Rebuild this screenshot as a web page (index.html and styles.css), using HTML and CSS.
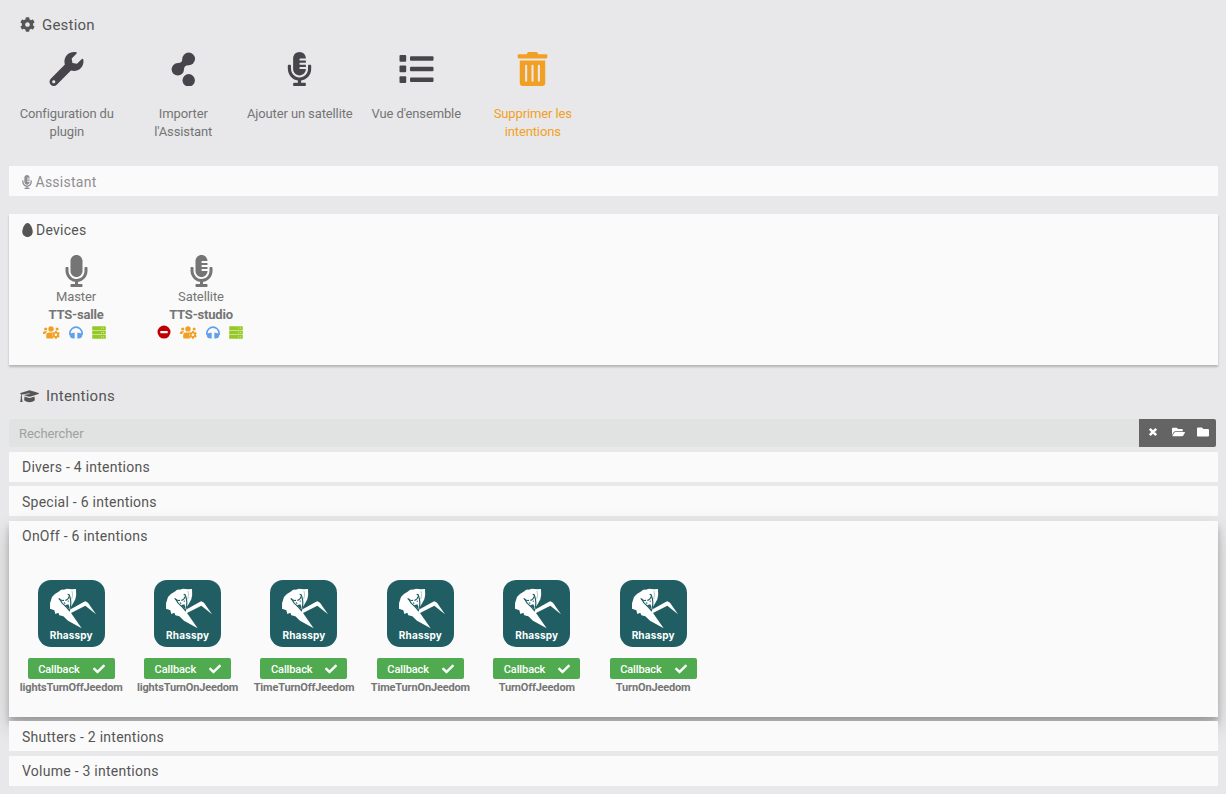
FILE: index.html
```html
<!DOCTYPE html>
<html lang="fr">
<head>
<meta charset="utf-8">
<title>Rhasspy</title>
<link rel="stylesheet" href="styles.css">
</head>
<body>
<svg class="sprite" aria-hidden="true">
  <symbol id="cog" viewBox="0 0 512 512"><path d="M487.4 315.7l-42.6-24.6c4.3-23.2 4.3-47 0-70.2l42.6-24.6c4.9-2.8 7.1-8.6 5.5-14-11.1-35.6-30-67.8-54.7-94.6-3.8-4.1-10-5.1-14.8-2.3L380.8 110c-17.9-15.4-38.5-27.3-60.8-35.1V25.8c0-5.6-3.9-10.5-9.4-11.7-36.7-8.2-74.3-7.8-109.2 0-5.5 1.2-9.4 6.1-9.4 11.7V75c-22.2 7.9-42.8 19.8-60.8 35.1L88.7 85.5c-4.9-2.8-11-1.9-14.8 2.3-24.7 26.7-43.6 58.9-54.7 94.6-1.7 5.4.6 11.2 5.5 14L67.3 221c-4.3 23.2-4.3 47 0 70.2l-42.6 24.6c-4.9 2.8-7.1 8.6-5.5 14 11.1 35.6 30 67.8 54.7 94.6 3.8 4.1 10 5.1 14.8 2.3l42.6-24.6c17.9 15.4 38.5 27.3 60.8 35.1v49.2c0 5.6 3.9 10.5 9.4 11.7 36.7 8.2 74.3 7.8 109.2 0 5.5-1.2 9.4-6.1 9.4-11.7v-49.2c22.2-7.9 42.8-19.8 60.8-35.1l42.6 24.6c4.9 2.8 11 1.9 14.8-2.3 24.7-26.7 43.6-58.9 54.7-94.6 1.5-5.5-.7-11.3-5.6-14.1zM256 336c-44.1 0-80-35.9-80-80s35.9-80 80-80 80 35.9 80 80-35.9 80-80 80z"/></symbol>
  <symbol id="wrench" viewBox="0 0 512 512"><path d="M507.73 109.1c-2.24-9.03-13.54-12.09-20.12-5.51l-74.36 74.36-67.88-11.31-11.31-67.88 74.36-74.36c6.62-6.62 3.43-17.9-5.66-20.16-47.38-11.74-99.55.91-136.58 37.93-39.64 39.64-50.55 97.1-34.05 147.2L18.74 402.76c-24.99 24.99-24.99 65.51 0 90.5 24.99 24.99 65.51 24.99 90.5 0l213.21-213.21c50.12 16.71 107.47 5.68 147.37-34.22 37.07-37.07 49.7-89.32 37.91-136.73zM64 472c-13.25 0-24-10.75-24-24 0-13.26 10.75-24 24-24s24 10.74 24 24c0 13.25-10.75 24-24 24z"/></symbol>
  <symbol id="share" viewBox="0 0 24 34"><circle cx="17.2" cy="6.9" r="6.3"/><circle cx="6.3" cy="17.3" r="6.2"/><circle cx="17.2" cy="28.3" r="6.2"/><path d="M10.900 6.500C11 9.500 9.500 11.100 6.300 11.100l6.200 6.200c0-2.600 1.700-4.200 4.700-4.100z"/></symbol>
  <symbol id="mic" viewBox="0 0 352 512"><path d="M176 352c53.020 0 96-42.980 96-96V96c0-53.020-42.980-96-96-96S80 42.980 80 96v160c0 53.020 42.980 96 96 96zM336 192h-16c-8.840 0-16 7.160-16 16v48c0 74.800-64.490 134.820-140.790 127.380C96.710 376.890 48 317.110 48 250.300V208c0-8.840-7.160-16-16-16H16c-8.840 0-16 7.160-16 16v40.160c0 89.640 63.970 169.550 152 181.690V464H96c-8.840 0-16 7.160-16 16v16c0 8.840 7.160 16 16 16h160c8.840 0 16-7.160 16-16v-16c0-8.840-7.160-16-16-16h-56v-33.770C285.710 418.470 352 344.900 352 256v-48c0-8.840-7.160-16-16-16z"/></symbol>
  <symbol id="mic-alt" viewBox="0 0 352 512"><path d="M336 192h-16c-8.840 0-16 7.160-16 16v48c0 74.800-64.490 134.820-140.790 127.380C96.710 376.890 48 317.110 48 250.300V208c0-8.840-7.160-16-16-16H16c-8.840 0-16 7.160-16 16v40.160c0 89.640 63.970 169.550 152 181.690V464H96c-8.840 0-16 7.160-16 16v16c0 8.840 7.160 16 16 16h160c8.840 0 16-7.160 16-16v-16c0-8.840-7.160-16-16-16h-56v-33.770C285.710 418.470 352 344.900 352 256v-48c0-8.840-7.160-16-16-16zM176 352c53.020 0 96-42.980 96-96h-85.330c-5.890 0-10.670-3.580-10.670-8v-16c0-4.420 4.780-8 10.670-8H272v-32h-85.330c-5.890 0-10.670-3.580-10.670-8v-16c0-4.420 4.780-8 10.670-8H272v-32h-85.330c-5.890 0-10.670-3.580-10.670-8v-16c0-4.420 4.780-8 10.670-8H272c0-53.020-42.980-96-96-96S80 42.980 80 96v160c0 53.020 42.980 96 96 96z"/></symbol>
  <symbol id="list" viewBox="0 0 34 28"><rect width="6.700" height="6.700" rx="1"/><rect y="10.600" width="6.700" height="6.700" rx="1"/><rect y="21.200" width="6.700" height="6.700" rx="1"/><rect x="10.500" y="1.200" width="23.500" height="4.500" rx="1"/><rect x="10.500" y="11.800" width="23.500" height="4.500" rx="1"/><rect x="10.500" y="22.400" width="23.500" height="4.500" rx="1"/></symbol>
  <symbol id="trash" viewBox="0 0 448 512"><path d="M32 464a48 48 0 0 0 48 48h288a48 48 0 0 0 48-48V128H32zm272-256a16 16 0 0 1 32 0v224a16 16 0 0 1-32 0zm-96 0a16 16 0 0 1 32 0v224a16 16 0 0 1-32 0zm-96 0a16 16 0 0 1 32 0v224a16 16 0 0 1-32 0zM432 32H312l-9.400-18.700A24 24 0 0 0 281.100 0H166.800a23.720 23.720 0 0 0-21.400 13.300L136 32H16A16 16 0 0 0 0 48v32a16 16 0 0 0 16 16h416a16 16 0 0 0 16-16V48a16 16 0 0 0-16-16z"/></symbol>
  <symbol id="egg" viewBox="0 0 384 512"><path d="M192 0C86 0 0 214 0 320s86 192 192 192 192-86 192-192S298 0 192 0z"/></symbol>
  <symbol id="cap" viewBox="0 0 19 13"><path d="M9.500.3Q10 .3 18.500 3.100q.8.500 0 1L10 6.700q-.5.200-1 0L3.500 5.100 9.600 3.900 9.400 3.200 2.300 4.600Q1.700 5.200 1.700 6.200q.8.700.2 1.500L2.600 12H.2L.9 7.700Q.3 7 .9 6.200 1 5 1.400 4.400L.5 4.100q-.8-.5 0-1zM4.600 6.600 9 8q.5.100 1 0l4.400-1.400.5 3.700Q12.600 12.300 9.500 12.300T4.100 10.300z"/></symbol>
  <symbol id="ban" viewBox="0 0 14 14"><path fill-rule="evenodd" d="M7 .6a6.500 6.500 0 1 0 0 13 6.500 6.500 0 0 0 0-13zM3.300 6h7.400v2.300H3.300z"/></symbol>
  <symbol id="users-cog" viewBox="0 0 17 13"><circle cx="2.700" cy="3" r="1.600"/><circle cx="8" cy="2.900" r="2.700"/><circle cx="14.100" cy="3" r="1.500"/><path d="M0 8V6.700Q.1 5.300 1.500 5.300h2l.8.500Q2.500 6.700 2.300 8zM3.200 12V9.200Q3.300 6.400 6 6.400h3.700L9 7.500l.8 1-.8 1.500 1.200 1.500v.9H4z"/><svg x="8.800" y="4.700" width="8.200" height="8.200"><use href="#cog"/></svg></symbol>
  <symbol id="headphones" viewBox="0 0 14 13"><path d="M.9 9V7.300a6.100 6.100 0 0 1 12.200 0V9" fill="none" stroke="currentColor" stroke-width="1.700"/><path d="M5.700 6.700v5.800H4.500Q1 12.500.8 9.500.9 6.700 4.500 6.700zM8.300 6.700v5.800h1.200q3.500 0 3.700-3-.1-2.800-3.700-2.800z"/></symbol>
  <symbol id="server" viewBox="0 0 14 13"><rect x=".2" y=".2" width="13.600" height="3.900" rx=".5"/><rect x=".2" y="4.500" width="13.600" height="3.900" rx=".5"/><rect x=".2" y="8.900" width="13.600" height="3.900" rx=".5"/><path d="M9.200 2.100h.9m1 0h1M9.200 6.500h.9m1 0h1M9.200 10.900h.9m1 0h1" stroke="#e3f3bd" stroke-width=".9"/></symbol>
  <symbol id="check" viewBox="0 0 512 512"><path d="M173.898 439.404l-166.400-166.400c-9.997-9.997-9.997-26.206 0-36.204l36.203-36.204c9.997-9.998 26.207-9.998 36.204 0L192 312.690 432.095 72.596c9.997-9.997 26.207-9.997 36.204 0l36.203 36.204c9.997 9.997 9.997 26.206 0 36.204l-294.400 294.401c-9.998 9.997-26.207 9.997-36.204-.001z"/></symbol>
  <symbol id="times" viewBox="0 0 10 10"><path d="M1.800 1.800 8.200 8.200M8.200 1.800 1.800 8.200" stroke="currentColor" stroke-width="2.500"/></symbol>
  <symbol id="folder-open" viewBox="0 0 576 512"><path d="M572.694 292.093L500.270 416.248A63.997 63.997 0 0 1 444.989 448H45.025c-18.523 0-30.064-20.093-20.731-36.093l72.424-124.155A64 64 0 0 1 152 256h399.964c18.523 0 30.064 20.093 20.730 36.093zM152 224h328v-48c0-26.510-21.490-48-48-48H272l-64-64H48C21.490 64 0 85.490 0 112v278.046l69.077-118.418C86.214 242.250 117.989 224 152 224z"/></symbol>
  <symbol id="folder" viewBox="0 0 512 512"><path d="M464 128H272l-64-64H48C21.490 64 0 85.490 0 112v288c0 26.510 21.490 48 48 48h416c26.510 0 48-21.490 48-48V176c0-26.510-21.490-48-48-48z"/></symbol>
  <symbol id="rhasspy" viewBox="0 0 201 201">
    <path fill="#fff" d="M64 34Q68 28 77 29L87 26 102 28 114 27Q116 45 112 58 106 70 99 80L98 88 137 66 142 64 150 68 174 103 142 77 99 99 131 145 90 122 76 109 64 106 61 98 52 102 49 91 36 86Q34 68 42 51 52 40 64 34z"/>
    <path d="M62 55Q68 63 78 61M82 61Q90 60 94 49" fill="none" stroke="#205e63" stroke-width="3.500"/>
    <path d="M65 57Q70 70 84 80L94 92Q101 75 97 56L94 45Q92 43 89 43" fill="none" stroke="#205e63" stroke-width="3.500"/>
    <path fill="#205e63" d="M77 66 83 69 80 73zM88 64 92 61 92 67zM81 76 91 73 94 80 93 88z"/>
    <path d="M102 33Q106 44 101 58" fill="none" stroke="#205e63" stroke-width="1"/>
  </symbol>
</svg>

<main class="page">
  <h2 class="legend"><svg class="i-cog"><use href="#cog"/></svg>Gestion</h2>
  <nav class="actions">
    <a class="action"><svg><use href="#wrench"/></svg><span>Configuration du plugin</span></a>
    <a class="action"><svg><use href="#share"/></svg><span>Importer l'Assistant</span></a>
    <a class="action"><svg><use href="#mic-alt"/></svg><span>Ajouter un satellite</span></a>
    <a class="action"><svg class="i-list"><use href="#list"/></svg><span>Vue d'ensemble</span></a>
    <a class="action warning"><svg><use href="#trash"/></svg><span>Supprimer les intentions</span></a>
  </nav>

  <section class="panel assistant"><h3><svg class="i-mic"><use href="#mic-alt"/></svg>Assistant</h3></section>

  <section class="panel devices">
    <h3><svg class="i-egg"><use href="#egg"/></svg>Devices</h3>
    <div class="device-list">
      <div class="device">
        <svg class="device-icon"><use href="#mic"/></svg>
        <span>Master</span><strong>TTS-salle</strong>
        <div class="tools"><svg class="users"><use href="#users-cog"/></svg><svg class="phones"><use href="#headphones"/></svg><svg class="server"><use href="#server"/></svg></div>
      </div>
      <div class="device">
        <svg class="device-icon"><use href="#mic-alt"/></svg>
        <span>Satellite</span><strong>TTS-studio</strong>
        <div class="tools"><svg class="ban"><use href="#ban"/></svg><svg class="users"><use href="#users-cog"/></svg><svg class="phones"><use href="#headphones"/></svg><svg class="server"><use href="#server"/></svg></div>
      </div>
    </div>
  </section>

  <h2 class="legend intentions"><svg class="i-cap"><use href="#cap"/></svg>Intentions</h2>
  <div class="search">
    <input type="text" placeholder="Rechercher">
    <div class="search-buttons"><svg class="i-times"><use href="#times"/></svg><svg class="i-open"><use href="#folder-open"/></svg><svg class="i-folder"><use href="#folder"/></svg></div>
  </div>

  <div class="groups">
    <section class="panel raised"><h3>Divers - 4 intentions</h3></section>
    <section class="panel special"><h3>Special - 6 intentions</h3></section>
    <section class="panel open raised">
      <h3>OnOff - 6 intentions</h3>
      <div class="cards">
        <div class="card"><div class="logo"><svg><use href="#rhasspy"/></svg><span>Rhasspy</span></div><span class="badge">Callback<svg><use href="#check"/></svg></span><strong>lightsTurnOffJeedom</strong></div>
        <div class="card"><div class="logo"><svg><use href="#rhasspy"/></svg><span>Rhasspy</span></div><span class="badge">Callback<svg><use href="#check"/></svg></span><strong>lightsTurnOnJeedom</strong></div>
        <div class="card"><div class="logo"><svg><use href="#rhasspy"/></svg><span>Rhasspy</span></div><span class="badge">Callback<svg><use href="#check"/></svg></span><strong>TimeTurnOffJeedom</strong></div>
        <div class="card"><div class="logo"><svg><use href="#rhasspy"/></svg><span>Rhasspy</span></div><span class="badge">Callback<svg><use href="#check"/></svg></span><strong>TimeTurnOnJeedom</strong></div>
        <div class="card"><div class="logo"><svg><use href="#rhasspy"/></svg><span>Rhasspy</span></div><span class="badge">Callback<svg><use href="#check"/></svg></span><strong>TurnOffJeedom</strong></div>
        <div class="card"><div class="logo"><svg><use href="#rhasspy"/></svg><span>Rhasspy</span></div><span class="badge">Callback<svg><use href="#check"/></svg></span><strong>TurnOnJeedom</strong></div>
      </div>
    </section>
    <section class="panel after"><h3>Shutters - 2 intentions</h3></section>
    <section class="panel last raised"><h3>Volume - 3 intentions</h3></section>
  </div>
</main>
</body>
</html>
```
FILE: styles.css
```css
* { box-sizing: border-box; }
body {
  margin: 0;
  height: 794px;
  overflow: hidden;
  background: #e8e8ea;
  color: #555;
  font-family: Roboto, "Liberation Sans", sans-serif;
  font-size: 13px;
}
svg { display: block; flex: none; fill: currentColor; }
.sprite { width: 0; height: 0; position: absolute; }
.page { padding: 14px 8px 0 9px; }
h2, h3 { margin: 0; font-weight: 400; display: flex; align-items: center; }
.legend { height: 22px; padding-left: 11px; font-size: 15px; letter-spacing: .22px; }
.i-cog { width: 15px; height: 15px; margin: 0 7px 1px 0; }
.i-cap { width: 19px; height: 13px; margin-right: 7px; }

.actions { display: flex; height: 130px; padding-top: 16px; margin-left: -.5px; }
.action {
  width: 116.500px;
  display: flex;
  flex-direction: column;
  align-items: center;
  text-align: center;
  line-height: 18px;
  letter-spacing: -.12px;
  color: #757575;
}
.action svg { width: 35px; height: 34px; margin-bottom: 19px; color: #47454b; }
.action .i-list { height: 28px; margin: 3px 0 22px; }
.action span { width: 108px; }
.action.warning, .action.warning svg { color: #f2a024; }
.action.warning span { width: 90px; }

.panel { background: #fafafa; height: 30px; padding-left: 13px; }
.panel h3 { height: 30px; font-size: 14px; letter-spacing: .25px; padding-top: 2px; }
.panel.raised h3 { padding-top: 0; }
.assistant { color: #8f8e94; }
.i-mic { width: 10px; height: 14px; margin-right: 3.500px; }
.i-egg { width: 11px; height: 14px; margin-right: 3px; }
.devices { height: 151px; margin-top: 18px; box-shadow: 0 2px 2px rgba(0,0,0,.22); }
.device-list { display: flex; padding-top: 11px; }
.device { width: 125px; margin-left: -8.500px; margin-right: 8.500px; display: flex; flex-direction: column; align-items: center; line-height: 18px; letter-spacing: -.08px; color: #757575; }
.device-icon { width: 23px; height: 32px; }
.device-icon + span { margin-top: 1px; }
.device strong { letter-spacing: -.2px; }
.tools { display: flex; align-items: center; height: 16px; margin-right: 2.500px; }
.users { width: 17px; height: 13px; color: #f2a024; }
.phones { width: 14px; height: 13px; margin: 0 9px; color: #62a0e8; }
.server { width: 14px; height: 13px; color: #96c927; }
.ban { width: 14px; height: 14px; margin-right: 9px; color: #c00000; }

.intentions { margin-top: 20px; }
.search { display: flex; width: 1207px; height: 28px; margin-top: 12px; }
.search input {
  flex: 1;
  min-width: 0;
  border: 0;
  padding: 0 10px;
  background: #e0e3e2;
  font: 13px Roboto, "Liberation Sans", sans-serif;
  letter-spacing: -.08px;
  border-radius: 2px 0 0 2px;
}
.search input::placeholder { color: #a0a0a0; opacity: 1; }
.search-buttons { width: 77px; display: flex; align-items: center; padding: 0 7px 2px 9px; justify-content: space-between; color: #fff; background: #646464; border-radius: 0 2px 2px 0; }
.i-times { width: 10px; height: 10px; }
.i-open { width: 13px; height: 12px; margin-left: 2px; }
.i-folder { width: 12px; height: 12px; }

.groups { margin-top: 5px; }
.special { margin-top: 4px; }
.open { height: 196px; margin-top: 5px; position: relative; box-shadow: 0 10px 20px rgba(0,0,0,.19), 0 6px 6px rgba(0,0,0,.2); }
.after { position: relative; margin-top: 4px; }
.last { position: relative; margin-top: 5px; }
.cards { display: flex; margin-left: -9px; padding-top: 29px; }
.card { width: 116.400px; display: flex; flex-direction: column; align-items: center; color: #757575; font-size: 11px; line-height: 16px; }
.card strong { font-weight: 700; white-space: nowrap; margin-top: 1px; letter-spacing: -.16px; }
.logo { position: relative; width: 67px; height: 67px; border-radius: 13px; background: #205e63; }
.logo svg { width: 67px; height: 67px; }
.logo span { position: absolute; left: 0; right: 0; top: 48px; height: 14px; text-align: center; color: #fff; font: 700 10px/14px Inter, sans-serif; letter-spacing: .15px; }
.badge { width: 87px; height: 21px; margin-top: 11px; padding: 2px 10px 0 10.500px; display: flex; align-items: center; justify-content: space-between; border-radius: 2px; background: #50aa50; color: #fff; font-weight: 500; letter-spacing: -.1px; }
.badge svg { width: 12px; height: 12px; margin-bottom: 1px; }
```
